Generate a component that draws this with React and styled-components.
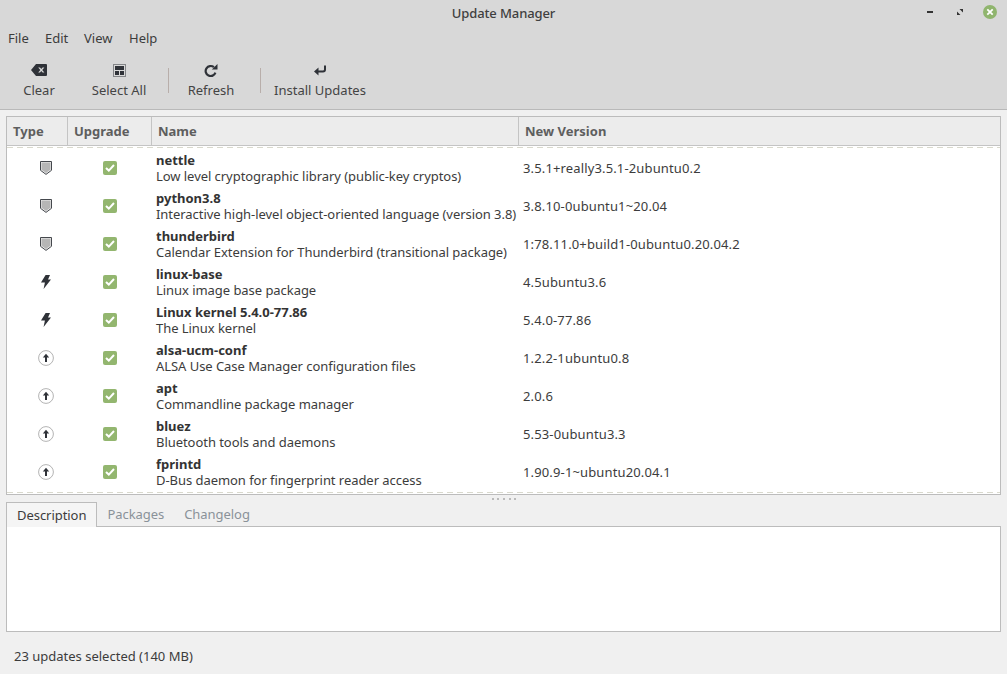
import React from 'react'
import styled, { createGlobalStyle } from 'styled-components'

const updates = [
  { type: 'security', name: 'nettle', desc: 'Low level cryptographic library (public-key cryptos)', version: '3.5.1+really3.5.1-2ubuntu0.2' },
  { type: 'security', name: 'python3.8', desc: 'Interactive high-level object-oriented language (version 3.8)', version: '3.8.10-0ubuntu1~20.04' },
  { type: 'security', name: 'thunderbird', desc: 'Calendar Extension for Thunderbird (transitional package)', version: '1:78.11.0+build1-0ubuntu0.20.04.2' },
  { type: 'kernel', name: 'linux-base', desc: 'Linux image base package', version: '4.5ubuntu3.6' },
  { type: 'kernel', name: 'Linux kernel 5.4.0-77.86', desc: 'The Linux kernel', version: '5.4.0-77.86' },
  { type: 'package', name: 'alsa-ucm-conf', desc: 'ALSA Use Case Manager configuration files', version: '1.2.2-1ubuntu0.8' },
  { type: 'package', name: 'apt', desc: 'Commandline package manager', version: '2.0.6' },
  { type: 'package', name: 'bluez', desc: 'Bluetooth tools and daemons', version: '5.53-0ubuntu3.3' },
  { type: 'package', name: 'fprintd', desc: 'D-Bus daemon for fingerprint reader access', version: '1.90.9-1~ubuntu20.04.1' },
]

const GlobalStyle = createGlobalStyle`
  html, body { margin: 0; padding: 0; }
  body {
    font-family: "Noto Sans", "Liberation Sans", sans-serif;
    font-size: 13px;
    color: #3c3c3c;
    background: #f0f0f0;
  }
`

const Window = styled.div`
  width: 1007px;
  height: 674px;
  display: flex;
  flex-direction: column;
  overflow: hidden;
  background: #f0f0f0;
`

const Top = styled.header`
  height: 109px;
  flex: none;
  background: #d8d8d8;
  border-bottom: 1px solid #b9b9b9;
  display: flex;
  flex-direction: column;
`

const TitleBar = styled.div`
  height: 26px;
  flex: none;
  display: grid;
  grid-template-columns: 1fr auto 1fr;
  align-items: center;
`

const Title = styled.div`
  grid-column: 2;
  font-weight: 500;
  letter-spacing: -0.1px;
  color: #3f3f3f;
`

const WindowButtons = styled.div`
  grid-column: 3;
  justify-self: end;
  display: flex;
  align-items: center;
  gap: 24px;
  padding-right: 10px;
  padding-bottom: 2px;
  svg { display: block; }
  svg:last-child { margin-left: -4px; }
`

const MenuBar = styled.nav`
  height: 24px;
  flex: none;
  display: flex;
  align-items: center;
  padding-left: 8px;
`

const MenuItem = styled.span`
  width: ${p => p.$w}px;
  color: #3c3c3c;
`

const Toolbar = styled.div`
  flex: 1;
  display: flex;
  align-items: flex-start;
  padding: 13px 0 0 6px;
`

const ToolButton = styled.button`
  width: ${p => p.$w}px;
  height: 36px;
  padding: 0;
  border: 0;
  background: none;
  font: inherit;
  line-height: 18px;
  color: #444;
  display: flex;
  flex-direction: column;
  align-items: center;
  gap: 4px;
`

const ToolIcon = styled.span`
  height: 14px;
  display: flex;
  align-items: center;
  justify-content: center;
  svg { display: block; }
`

const ToolSeparator = styled.div`
  width: 1px;
  height: 25px;
  margin: 5px 1px 0 ${p => p.$left || 0}px;
  background: #b8aeaa;
`

const Content = styled.main`
  flex: 1;
  display: flex;
  flex-direction: column;
  padding: 6px 6px 0;
`

const TreeFrame = styled.section`
  height: 379px;
  flex: none;
  box-sizing: border-box;
  border: 1px solid #bcbcbc;
  background: #fff;
  display: flex;
  flex-direction: column;
`

const Columns = styled.div`
  display: grid;
  grid-template-columns: 61px 84px 367px 1fr;
`

const HeaderRow = styled(Columns)`
  height: 28px;
  flex: none;
  background: #ececec;
  border-bottom: 1px solid #c4c4c4;
`

const HeaderCell = styled.div`
  display: flex;
  align-items: center;
  padding-left: 6px;
  font-weight: 700;
  color: #5e5e5e;
  border-right: ${p => (p.$last ? 0 : '1px solid #c4c4c4')};
`

const DashLine = styled.div`
  height: 1px;
  flex: none;
  margin: ${p => p.$margin};
  background: repeating-linear-gradient(90deg, #d9d9cd 0 6px, #fff 6px 10px);
`

const RowList = styled.div`
  flex: none;
`

const Row = styled(Columns)`
  height: 38px;
  align-items: center;
`

const IconCell = styled.div`
  display: flex;
  justify-content: center;
  align-items: center;
  padding-left: ${p => p.$pad || 0}px;
  svg { display: block; }
`

const NameCell = styled.div`
  padding-left: 4px;
  line-height: 16px;
  white-space: nowrap;
`

const PackageName = styled.div`
  font-weight: 700;
  color: #333;
`

const PackageDesc = styled.div`
  letter-spacing: -0.05px;
  color: #3c3c3c;
`

const VersionCell = styled.div`
  padding-left: 4px;
  letter-spacing: 0.14px;
  white-space: nowrap;
`

const Check = styled.span`
  width: 14px;
  height: 14px;
  border-radius: 2px;
  background: #93b66f;
  display: flex;
  align-items: center;
  justify-content: center;
`

const Grip = styled.div`
  height: 7px;
  flex: none;
  display: flex;
  justify-content: center;
  align-items: center;
  gap: 3.6px;
  padding-left: 1px;
  span {
    width: 2px;
    height: 2px;
    border-radius: 1px;
    background: #a9a9a9;
  }
`

const TabBar = styled.div`
  height: 25px;
  flex: none;
  display: flex;
  position: relative;
  z-index: 1;
`

const Tab = styled.div`
  box-sizing: border-box;
  height: ${p => (p.$active ? 25 : 24)}px;
  padding: 0 10px;
  display: flex;
  align-items: center;
  letter-spacing: -0.05px;
  color: ${p => (p.$active ? '#3c3c3c' : '#8a9299')};
  background: ${p => (p.$active ? '#f5f5f5' : 'transparent')};
  border: ${p => (p.$active ? '1px solid #bcbcbc' : 0)};
  border-bottom: 0;
`

const TabPage = styled.div`
  height: 106px;
  flex: none;
  box-sizing: border-box;
  margin-top: -1px;
  background: #fff;
  border: 1px solid #bcbcbc;
`

const StatusBar = styled.footer`
  flex: 1;
  display: flex;
  align-items: center;
  padding: 6px 0 0 8px;
  color: #3c3c3c;
`

const ClearIcon = () => (
  <svg width="16" height="12" viewBox="0 0 16 12">
    <path fill="#2f3238" fillRule="evenodd" d="M5 0h10a1 1 0 0 1 1 1v10a1 1 0 0 1-1 1H5L0 6zM7.200 3.400l2.200 2.600-2.200 2.600h1.800l1.300-1.500 1.300 1.500h1.800l-2.200-2.600 2.200-2.600h-1.800l-1.300 1.500-1.300-1.500z" />
  </svg>
)

const SelectAllIcon = () => (
  <svg width="13" height="13" viewBox="0 0 13 13">
    <rect x="0.5" y="0.5" width="12" height="12" fill="none" stroke="#2f3238" strokeDasharray="1 1" />
    <rect x="2" y="2" width="9" height="4" fill="#2f3238" />
    <rect x="2" y="7" width="4" height="4" fill="#2f3238" />
    <rect x="7" y="7" width="4" height="4" fill="#2f3238" />
  </svg>
)

const RefreshIcon = () => (
  <svg width="14" height="13" viewBox="0 0 14 13">
    <path fill="none" stroke="#2f3238" strokeWidth="2.200" d="M11.400 8.600A5 5 0 1 1 9.900 3.200" />
    <path fill="#2f3238" d="M7.800 5.400h5.700V0z" />
  </svg>
)

const InstallIcon = () => (
  <svg width="12" height="11" viewBox="0 0 12 11">
    <path fill="none" stroke="#2f3238" strokeWidth="2" d="M11 0.500V4.500a2 2 0 0 1-2 2H3" />
    <path fill="#2f3238" d="M4.500 2.500v8L0 6.500z" />
  </svg>
)

const ShieldIcon = () => (
  <svg width="12" height="14" viewBox="0 0 12 14">
    <path fill="#f2f2f2" stroke="#45484d" d="M0.500 0.500h11v8.800L6 13.400 0.500 9.300z" />
    <path fill="#b6b6b6" d="M1.500 1.500h9v7.300L6 12.100 1.500 8.800z" />
  </svg>
)

const BoltIcon = () => (
  <svg width="10" height="14" viewBox="0 0 10 14">
    <path fill="#2f3238" d="M4.600 0H9L7 4.600h3L2.600 14l1.300-6.400H0z" />
  </svg>
)

const ArrowUpIcon = () => (
  <svg width="16" height="16" viewBox="0 0 16 16">
    <circle cx="8" cy="8" r="7.400" fill="#fff" stroke="#a0a0a0" strokeWidth="0.800" />
    <path fill="#2f3238" d="M8 3.800L11.200 7.600H9v4.400H7V7.600H4.800z" />
  </svg>
)

const typeIcons = { security: ShieldIcon, kernel: BoltIcon, package: ArrowUpIcon }

const CheckMark = () => (
  <svg width="10" height="8" viewBox="0 0 10 8">
    <path fill="none" stroke="#fff" strokeWidth="2" d="M1 4l2.800 2.600L9 1" />
  </svg>
)

const App = () => (
  <Window>
    <GlobalStyle />
    <Top>
      <TitleBar>
        <Title>Update Manager</Title>
        <WindowButtons>
          <svg width="6" height="14" viewBox="0 0 6 14"><rect y="6" width="6" height="2" fill="#333" /></svg>
          <svg width="6" height="14" viewBox="0 0 6 14"><path fill="#333" d="M2.500 4H6v3.500zM0 6.500L3.500 10H0z" /></svg>
          <svg width="14" height="14" viewBox="0 0 14 14">
            <circle cx="7" cy="7" r="7" fill="#90b56e" />
            <path stroke="#fff" strokeWidth="1.800" d="M4.300 4.300l5.400 5.400M9.700 4.300l-5.400 5.400" />
          </svg>
        </WindowButtons>
      </TitleBar>
      <MenuBar>
        <MenuItem $w={37}>File</MenuItem>
        <MenuItem $w={39}>Edit</MenuItem>
        <MenuItem $w={45}>View</MenuItem>
        <MenuItem>Help</MenuItem>
      </MenuBar>
      <Toolbar>
        <ToolButton $w={66}><ToolIcon><ClearIcon /></ToolIcon>Clear</ToolButton>
        <ToolButton $w={94}><ToolIcon><SelectAllIcon /></ToolIcon>Select All</ToolButton>
        <ToolSeparator $left={2} />
        <ToolButton $w={82}><ToolIcon><RefreshIcon /></ToolIcon>Refresh</ToolButton>
        <ToolSeparator $left={8} />
        <ToolButton $w={116}><ToolIcon><InstallIcon /></ToolIcon>Install Updates</ToolButton>
      </Toolbar>
    </Top>
    <Content>
      <TreeFrame>
        <HeaderRow>
          <HeaderCell>Type</HeaderCell>
          <HeaderCell>Upgrade</HeaderCell>
          <HeaderCell>Name</HeaderCell>
          <HeaderCell $last>New Version</HeaderCell>
        </HeaderRow>
        <DashLine $margin="1px 0" />
        <RowList>
          {updates.map(u => {
            const TypeIcon = typeIcons[u.type]
            return (
              <Row key={u.name}>
                <IconCell $pad={16}><TypeIcon /></IconCell>
                <IconCell><Check><CheckMark /></Check></IconCell>
                <NameCell>
                  <PackageName>{u.name}</PackageName>
                  <PackageDesc>{u.desc}</PackageDesc>
                </NameCell>
                <VersionCell>{u.version}</VersionCell>
              </Row>
            )
          })}
        </RowList>
        <DashLine $margin="1px 0 0" />
      </TreeFrame>
      <Grip><span /><span /><span /><span /><span /></Grip>
      <TabBar>
        <Tab $active>Description</Tab>
        <Tab>Packages</Tab>
        <Tab>Changelog</Tab>
      </TabBar>
      <TabPage />
      <StatusBar>23 updates selected (140 MB)</StatusBar>
    </Content>
  </Window>
)

export default App
